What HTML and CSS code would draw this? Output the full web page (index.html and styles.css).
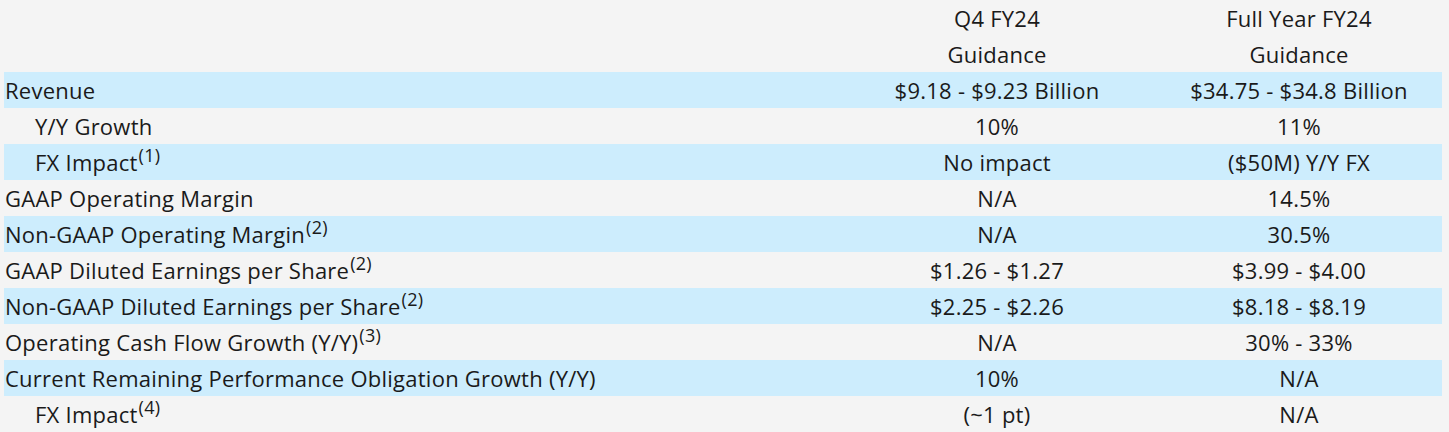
FILE: index.html
```html
<!DOCTYPE html>
<html>
<head>
<meta charset="utf-8">
<link rel="stylesheet" href="styles.css">
</head>
<body>
<table class="guide">
  <thead>
    <tr>
      <th class="label"></th>
      <th class="c2">Q4 FY24<br>Guidance</th>
      <th class="c3">Full Year FY24<br>Guidance</th>
    </tr>
  </thead>
  <tbody>
    <tr class="blue"><td class="label">Revenue</td><td class="c2">$9.18 - $9.23 Billion</td><td class="c3">$34.75 - $34.8 Billion</td></tr>
    <tr><td class="label sub">Y/Y Growth</td><td class="c2">10%</td><td class="c3">11%</td></tr>
    <tr class="blue"><td class="label sub">FX Impact<sup>(1)</sup></td><td class="c2">No impact</td><td class="c3">($50M) Y/Y FX</td></tr>
    <tr><td class="label">GAAP Operating Margin</td><td class="c2">N/A</td><td class="c3">14.5%</td></tr>
    <tr class="blue"><td class="label">Non-GAAP Operating Margin<sup>(2)</sup></td><td class="c2">N/A</td><td class="c3">30.5%</td></tr>
    <tr><td class="label">GAAP Diluted Earnings per Share<sup>(2)</sup></td><td class="c2">$1.26 - $1.27</td><td class="c3">$3.99 - $4.00</td></tr>
    <tr class="blue"><td class="label">Non-GAAP Diluted Earnings per Share<sup>(2)</sup></td><td class="c2">$2.25 - $2.26</td><td class="c3">$8.18 - $8.19</td></tr>
    <tr><td class="label">Operating Cash Flow Growth (Y/Y)<sup>(3)</sup></td><td class="c2">N/A</td><td class="c3">30% - 33%</td></tr>
    <tr class="blue"><td class="label">Current Remaining Performance Obligation Growth (Y/Y)</td><td class="c2">10%</td><td class="c3">N/A</td></tr>
    <tr><td class="label sub">FX Impact<sup>(4)</sup></td><td class="c2">(~1 pt)</td><td class="c3">N/A</td></tr>
  </tbody>
</table>
</body>
</html>
```
FILE: styles.css
```css
html, body {
  margin: 0;
  padding: 0;
  background: #f4f4f4;
}
body {
  padding: 0 7px 0 4px;
  font-family: "Open Sans", "Noto Sans", sans-serif;
  font-size: 22px;
  letter-spacing: 0.25px;
  color: #1a1a1a;
}
.guide {
  width: 1438px;
  border-collapse: collapse;
  table-layout: fixed;
}
.guide th, .guide td {
  padding: 0;
  height: 36px;
  line-height: 36px;
  font-weight: normal;
  white-space: nowrap;
  vertical-align: middle;
}
.guide th {
  height: 72px;
}
.label {
  text-align: left;
  padding-left: 1px !important;
}
.label.sub {
  padding-left: 31px !important;
}
.c2 {
  width: 302px;
  text-align: center;
}
.c3 {
  width: 294px;
  text-align: center;
  padding-left: 8px !important;
  box-sizing: border-box;
}
.blue td {
  background: #cdedfd;
}
sup {
  font-size: 18px;
  line-height: 0;
  vertical-align: 0;
  position: relative;
  top: -9px;
  margin-left: 1px;
}
```
